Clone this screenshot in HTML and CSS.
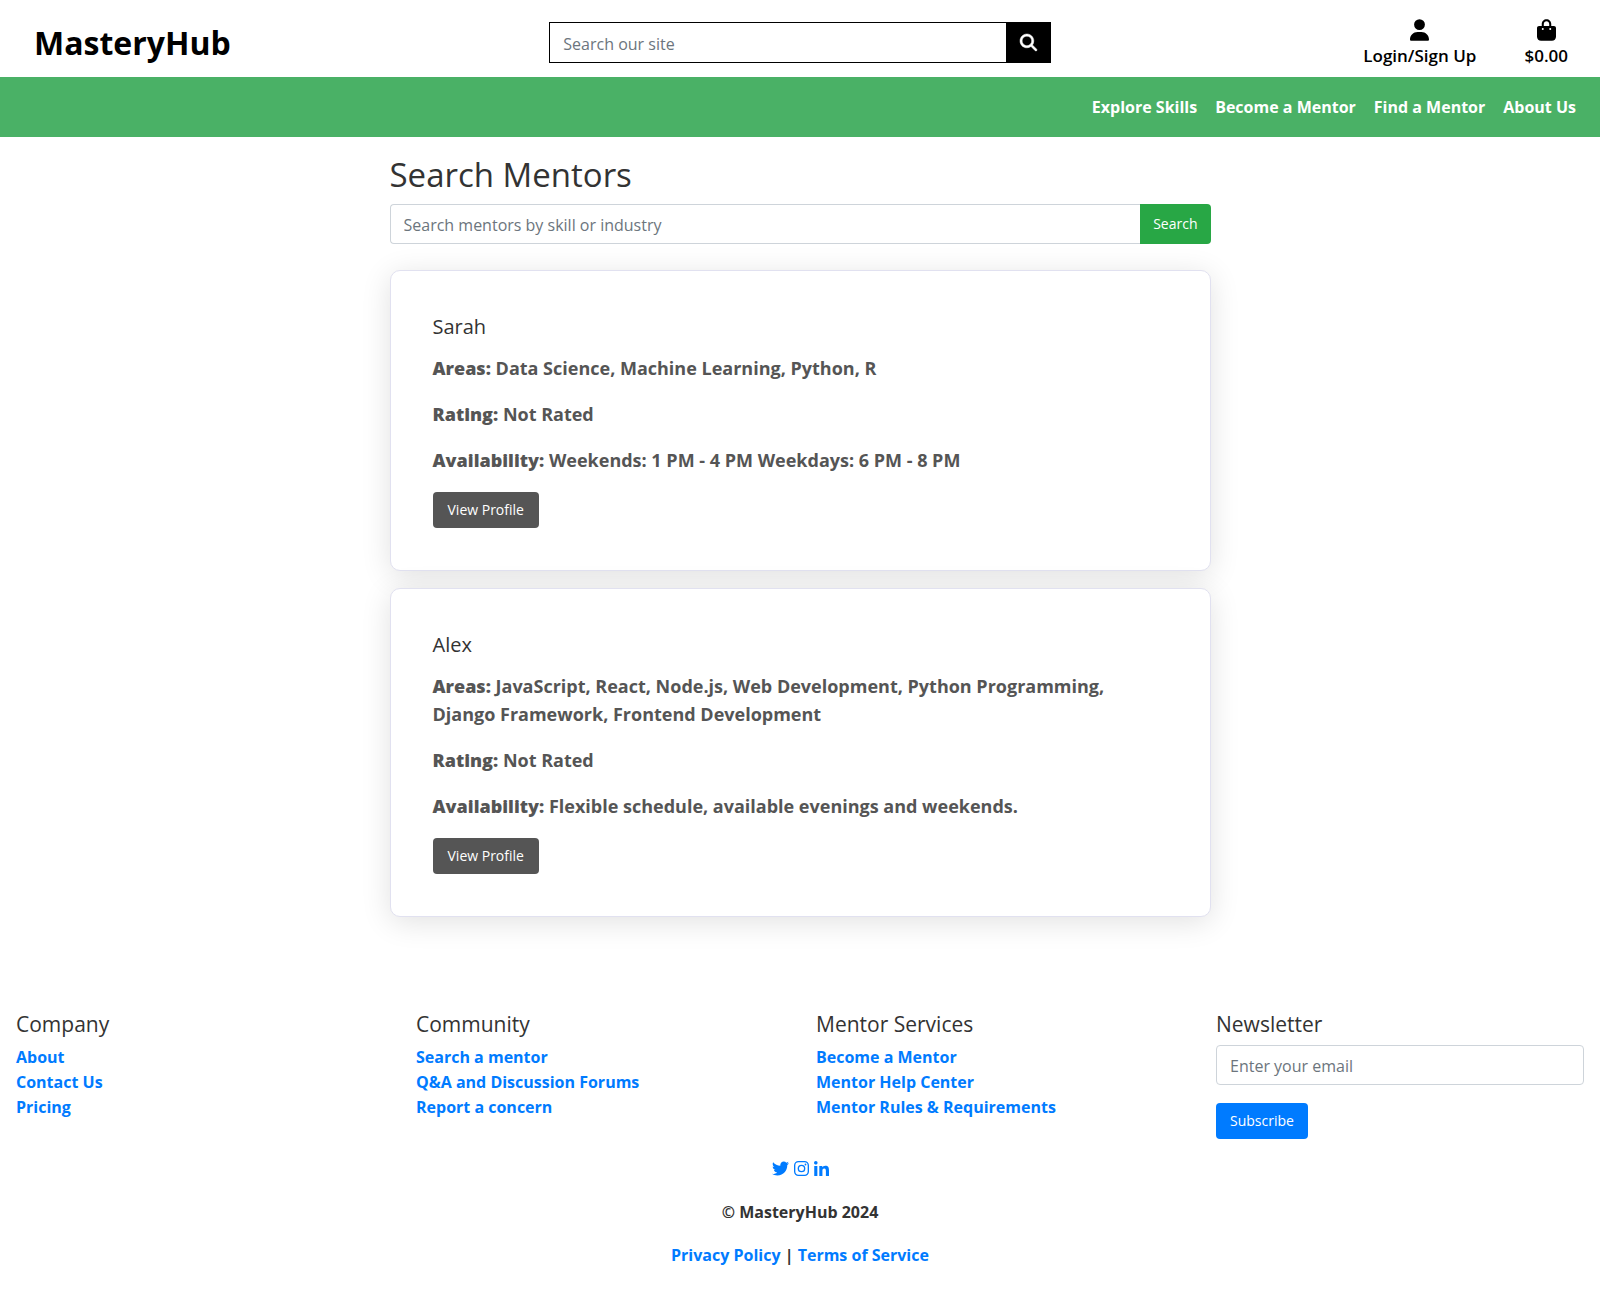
FILE: index.html
```html
<!DOCTYPE html>
<html lang="en">
<head>
<meta charset="utf-8">
<meta name="viewport" content="width=device-width, initial-scale=1">
<title>MasteryHub</title>
<link rel="stylesheet" href="styles.css">
</head>
<body>
<header class="topbar">
  <a class="brand" href="#">MasteryHub</a>
  <form class="site-search">
    <input class="field site-field" type="text" aria-label="Search our site" placeholder="Search our site">
    <button class="site-button" type="submit" aria-label="Search">
      <svg viewBox="0 0 512 512" width="17" height="17" fill="currentColor" stroke="currentColor" stroke-width="14" aria-hidden="true"><path d="M416 208c0 45.900-14.900 88.300-40 122.700L502.600 457.400c12.500 12.500 12.500 32.800 0 45.300s-32.800 12.500-45.300 0L330.700 376c-34.400 25.200-76.800 40-122.700 40C93.100 416 0 322.900 0 208S93.100 0 208 0S416 93.100 416 208zM208 352a144 144 0 1 0 0-288 144 144 0 1 0 0 288z"/></svg>
    </button>
  </form>
  <div class="account">
    <a class="account-link" href="#">
      <svg viewBox="0 0 448 512" width="19" height="22" fill="currentColor" aria-hidden="true"><path d="M224 256A128 128 0 1 0 224 0a128 128 0 1 0 0 256zm-45.700 48C79.800 304 0 383.800 0 482.300C0 498.700 13.300 512 29.700 512H418.300c16.400 0 29.700-13.300 29.700-29.700C448 383.800 368.200 304 269.700 304H178.300z"/></svg>
      <span>Login/Sign Up</span>
    </a>
    <a class="account-link" href="#">
      <svg viewBox="0 0 448 512" width="19" height="22" fill="currentColor" aria-hidden="true"><path d="M160 112c0-35.300 28.700-64 64-64s64 28.700 64 64v48H160V112zm-48 48H48c-26.500 0-48 21.500-48 48V416c0 53 43 96 96 96H352c53 0 96-43 96-96V208c0-26.500-21.500-48-48-48H336V112C336 50.100 285.900 0 224 0S112 50.100 112 112v48zm24 48a24 24 0 1 1 0 48 24 24 0 1 1 0-48zm152 24a24 24 0 1 1 48 0 24 24 0 1 1 -48 0z"/></svg>
      <span>$0.00</span>
    </a>
  </div>
</header>

<nav class="mainnav">
  <a href="#">Explore Skills</a>
  <a href="#">Become a Mentor</a>
  <a href="#">Find a Mentor</a>
  <a href="#">About Us</a>
</nav>

<main class="content">
  <h1 class="page-title">Search Mentors</h1>
  <form class="mentor-search">
    <input class="field mentor-field" type="text" aria-label="Search mentors" placeholder="Search mentors by skill or industry">
    <button class="btn btn-green" type="submit">Search</button>
  </form>

  <article class="card">
    <h2 class="card-title">Sarah</h2>
    <p><strong>Areas:</strong> Data Science, Machine Learning, Python, R</p>
    <p><strong>Rating:</strong> Not Rated</p>
    <p><strong>Availability:</strong> Weekends: 1 PM - 4 PM Weekdays: 6 PM - 8 PM</p>
    <a class="btn btn-dark" href="#">View Profile</a>
  </article>

  <article class="card">
    <h2 class="card-title">Alex</h2>
    <p><strong>Areas:</strong> JavaScript, React, Node.js, Web Development, Python Programming, Django Framework, Frontend Development</p>
    <p><strong>Rating:</strong> Not Rated</p>
    <p><strong>Availability:</strong> Flexible schedule, available evenings and weekends.</p>
    <a class="btn btn-dark" href="#">View Profile</a>
  </article>
</main>

<footer class="footer">
  <div class="footer-columns">
    <section>
      <h2 class="footer-title">Company</h2>
      <ul class="links">
        <li><a href="#">About</a></li>
        <li><a href="#">Contact Us</a></li>
        <li><a href="#">Pricing</a></li>
      </ul>
    </section>
    <section>
      <h2 class="footer-title">Community</h2>
      <ul class="links">
        <li><a href="#">Search a mentor</a></li>
        <li><a href="#">Q&amp;A and Discussion Forums</a></li>
        <li><a href="#">Report a concern</a></li>
      </ul>
    </section>
    <section>
      <h2 class="footer-title">Mentor Services</h2>
      <ul class="links">
        <li><a href="#">Become a Mentor</a></li>
        <li><a href="#">Mentor Help Center</a></li>
        <li><a href="#">Mentor Rules &amp; Requirements</a></li>
      </ul>
    </section>
    <section>
      <h2 class="footer-title">Newsletter</h2>
      <form class="newsletter">
        <input class="field" type="email" aria-label="Email" placeholder="Enter your email">
        <button class="btn btn-blue" type="submit">Subscribe</button>
      </form>
    </section>
  </div>
  <div class="social">
    <a href="#" aria-label="Twitter"><svg viewBox="0 0 512 512" width="17" height="17" fill="currentColor" aria-hidden="true"><path d="M459.400 151.700c.3 4.500 .3 9.100 .3 13.600 0 138.700-105.600 298.600-298.600 298.600-59.500 0-114.700-17.200-161.100-47.100 8.400 1 16.600 1.300 25.300 1.300 49.100 0 94.200-16.600 130.300-44.800-46.100-1-84.800-31.200-98.100-72.800 6.500 1 13 1.600 19.800 1.600 9.400 0 18.800-1.300 27.600-3.600-48.100-9.700-84.100-52-84.100-103v-1.300c14 7.800 30.200 12.700 47.400 13.300-28.300-18.800-46.800-51-46.800-87.400 0-19.500 5.200-37.400 14.300-53 51.700 63.700 129.300 105.300 216.400 109.800-1.600-7.800-2.600-15.900-2.600-24 0-57.800 46.800-104.900 104.900-104.900 30.200 0 57.500 12.700 76.700 33.100 23.700-4.500 46.500-13.300 66.600-25.300-7.800 24.400-24.400 44.800-46.100 57.800 21.100-2.300 41.600-8.100 60.400-16.200-14.300 20.800-32.200 39.300-52.600 54.300z"/></svg></a>
    <a href="#" aria-label="Instagram"><svg viewBox="0 0 448 448" width="15" height="15" fill="none" stroke="currentColor" aria-hidden="true"><rect x="20" y="20" width="408" height="408" rx="112" stroke-width="40"/><circle cx="224" cy="224" r="95" stroke-width="40"/><circle cx="343" cy="105" r="27" fill="currentColor" stroke="none"/></svg></a>
    <a href="#" aria-label="LinkedIn"><svg viewBox="0 0 448 448" width="15" height="15" fill="currentColor" aria-hidden="true"><path d="M100.300 448H7.400V148.900h92.900zM53.800 108.100C24.100 108.100 0 83.500 0 53.800a53.800 53.800 0 0 1 107.600 0c0 29.700-24.100 54.300-53.800 54.300zM447.900 448h-92.700V302.400c0-34.700-.7-79.200-48.300-79.200-48.300 0-55.700 37.700-55.700 76.700V448h-92.800V148.900h89.100v40.800h1.300c12.400-23.500 42.700-48.300 87.900-48.300 94 0 111.300 61.900 111.300 142.300V448z"/></svg></a>
  </div>
  <p>© MasteryHub 2024</p>
  <p><a href="#">Privacy Policy</a> | <a href="#">Terms of Service</a></p>
</footer>
</body>
</html>
```
FILE: styles.css
```css
* {
  box-sizing: border-box;
}

body {
  margin: 0;
  font-family: "Segoe UI", "Open Sans", "Noto Sans", sans-serif;
  font-size: 16px;
  font-weight: 700;
  line-height: 26px;
  color: #333;
  background: #fff;
}

a {
  color: #007bff;
  text-decoration: none;
}

svg {
  display: block;
  overflow: visible;
}

h1,
h2,
p,
ul {
  margin: 0;
  padding: 0;
}

.field {
  flex: 1;
  width: 100%;
  min-width: 0;
  height: 40px;
  padding: 2px 13px 0;
  border: 1px solid #ced4da;
  border-radius: 4px;
  font: inherit;
  font-weight: 400;
  background: #fff;
}

.field::placeholder {
  color: #6c757d;
  opacity: 1;
}

.btn {
  display: inline-block;
  height: 36px;
  padding: 0 13px;
  border: 1px solid transparent;
  border-radius: 4px;
  font: inherit;
  font-size: 14px;
  font-weight: 400;
  line-height: 34px;
  color: #fff;
}

.btn-green {
  height: 40px;
  padding: 0 12px;
  background: #28a745;
  border-radius: 0 4px 4px 0;
}

.btn-dark {
  padding: 0 14px;
  background: #555;
}

.btn-blue {
  background: #007bff;
}

/* Header */
.topbar {
  display: grid;
  grid-template-columns: repeat(3, 1fr);
  height: 77px;
}

.brand {
  padding: 21px 34px;
  font-size: 32px;
  font-weight: 700;
  line-height: 44px;
  color: #000;
}

.site-search {
  display: flex;
  padding: 22px 16px 0;
}

.site-field {
  height: 41px;
  border-color: #000;
  border-radius: 0;
}

.site-button {
  display: grid;
  place-items: center;
  width: 44px;
  height: 41px;
  padding: 0;
  border: 0;
  color: #fff;
  background: #000;
}

.account {
  display: flex;
  justify-content: flex-end;
  gap: 48px;
  padding: 19px 32px 0 0;
}

.account-link {
  display: flex;
  flex-direction: column;
  align-items: center;
  gap: 2px;
  font-size: 17px;
  font-weight: 600;
  color: #000;
}

.mainnav {
  display: flex;
  justify-content: flex-end;
  gap: 18px;
  padding: 17px 24px;
  background: #4ab166;
}

.mainnav a {
  color: #fff;
}

/* Mentor list */
.content {
  max-width: 853px;
  margin: 0 auto;
  padding: 17px 16px 0;
}

.page-title {
  margin-bottom: 8px;
  font-size: 33px;
  font-weight: 500;
  line-height: 42px;
}

.mentor-search {
  display: flex;
  margin-bottom: 26px;
}

.mentor-field {
  border-right: 0;
  border-radius: 4px 0 0 4px;
}

.card {
  margin-bottom: 17px;
  padding: 42px;
  border: 1px solid #e1e1f0;
  border-radius: 10px;
  background: #fff;
  box-shadow: 0 5px 30px rgba(0, 0, 0, 0.12);
}

.card-title {
  margin-bottom: 13px;
  font-size: 20px;
  font-weight: 500;
  line-height: 28px;
}

.card p {
  margin-bottom: 18px;
  font-size: 18px;
  line-height: 28px;
  color: #555;
}

.card strong {
  font-weight: 800;
}

.card .btn {
  display: block;
  width: fit-content;
}

/* Footer */
.footer {
  padding: 77px 0 40px;
  text-align: center;
}

.footer-columns {
  display: grid;
  grid-template-columns: repeat(4, 1fr);
  margin-bottom: 15px;
  text-align: left;
}

.footer-columns section {
  padding: 0 16px;
}

.footer-title {
  margin-bottom: 8px;
  font-size: 21px;
  font-weight: 500;
  line-height: 26px;
}

.links {
  line-height: 25px;
  list-style: none;
}

.newsletter {
  display: flex;
  flex-direction: column;
  align-items: flex-start;
  gap: 18px;
}

.newsletter .field {
  flex: none;
}

.social {
  display: flex;
  align-items: center;
  justify-content: center;
  gap: 5px;
  height: 28px;
}

.footer p {
  margin: 17px 0;
}
```
